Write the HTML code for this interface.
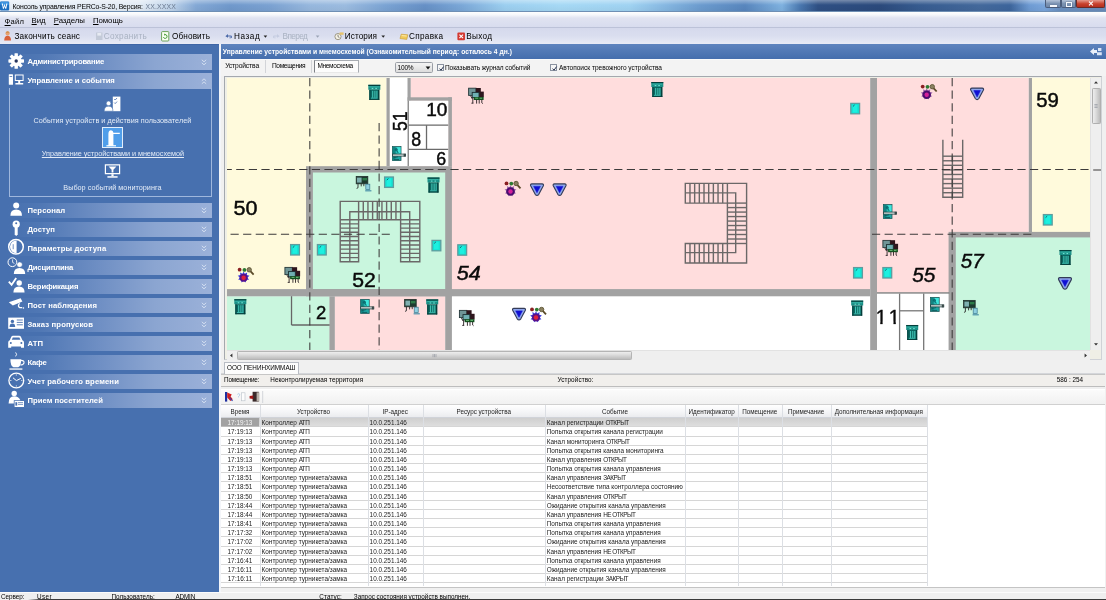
<!DOCTYPE html>
<html lang="ru"><head><meta charset="utf-8"><title>Консоль управления PERCo-S-20</title>
<style>
html,body{margin:0;padding:0;}
body{width:1106px;height:600px;overflow:hidden;background:#f0f0f0;font-family:'Liberation Sans',sans-serif;}
#root{position:relative;width:1106px;height:600px;overflow:hidden;background:#f0f0f0;}
#blur{position:absolute;left:-4px;top:-4px;width:1114px;height:608px;filter:blur(0.4px);}
#blur>#inner{position:absolute;left:4px;top:4px;width:1106px;height:600px;}
#root div,#root span{box-sizing:border-box;}
.t{position:absolute;white-space:pre;}
#title{position:absolute;left:0;top:0;width:1106px;height:12px;
 background:linear-gradient(180deg,rgba(255,255,255,.35) 0,rgba(255,255,255,0) 45%,rgba(0,0,0,.04) 100%),
 linear-gradient(90deg,#e8eff7 0,#e2ebf5 140px,#bed3ea 172px,#84a9d6 196px,#7099cc 230px,#7ba2d2 270px,#97b8de 310px,#9cbce0 345px,#7ba4d4 385px,#6690c6 425px,#7ba8d8 462px,#9ccff0 505px,#a6d9f5 560px,#a0d3f2 630px,#86b8e2 665px,#6c9ccf 700px,#5886be 745px,#7fb2e0 782px,#4a78b0 800px,#2f5084 818px,#2b4a7c 880px,#375c90 920px,#44699c 980px,#3d659c 1010px,#6f9cd4 1030px,#7aa6dc 1044px,#6a90c0 1060px,#6a8cba 1106px);
 border-bottom:1px solid #6f8fb4;}
#winbtns .wb{position:absolute;top:0;height:8px;background:linear-gradient(180deg,#b4c3d8,#7d94b3 50%,#6f88aa);border:0.6px solid #4b5d7c;border-top:none;border-radius:0 0 2px 2px;}
#winbtns .wb.cl{background:linear-gradient(180deg,#e59a8c,#c8402c 55%,#b3301f);border-color:#6a2a25;}
#menubar{position:absolute;left:0;top:12px;width:1106px;height:16px;background:linear-gradient(180deg,#ffffff 0,#f6f7fb 18%,#e0e3f1 40%,#d8dcee 100%);border-bottom:1px solid #bcc2d8;}
#toolbar{position:absolute;left:0;top:28px;width:1106px;height:16px;background:linear-gradient(180deg,#d5d9ec 0,#dadeef 50%,#e8eaf5 100%);}
#sidebar{position:absolute;left:0;top:44px;width:218.6px;height:547.6px;background:#4770af;border-top:1.6px solid #3f66a6;}
#split{position:absolute;left:218.6px;top:44px;width:2px;height:547.6px;background:#f3f5f9;}
.hd{position:absolute;left:8.4px;width:203.6px;height:15.6px;background:linear-gradient(90deg,#4770af 0,#4f77b4 15%,#6f8fc4 45%,#8ba5d1 72%,#9bb1d9 100%);}
#subpanel{position:absolute;left:9px;top:88.4px;width:202.6px;height:108.8px;border:1px solid #9fb7dd;border-top:none;}
#selicon{position:absolute;left:101.8px;top:126.8px;width:21.6px;height:20.8px;background:#509eea;border:1px solid #e3eefb;}
#main{position:absolute;left:220.6px;top:44px;width:884.4px;height:547.6px;background:#f0f0f0;}
#phead{position:absolute;left:220.6px;top:44.2px;width:885.4px;height:14.8px;background:linear-gradient(180deg,#5e84be,#456ead);}
#tabrow{position:absolute;left:220.6px;top:59px;width:885.4px;height:17px;background:#f3f3f3;border-top:1px solid #fafafa;}
#acttab{position:absolute;left:313.6px;top:59.8px;width:45.2px;height:13px;background:#fcfcfc;border:1px solid #a8acb2;border-left-color:#7d8086;border-bottom-color:#e8e8e8;}
.tsep{position:absolute;top:60.4px;width:1px;height:12.5px;background:#d2d4d8;}
#combo{position:absolute;left:394.8px;top:62px;width:38.6px;height:10.8px;background:linear-gradient(180deg,#f4f4f4,#e9e9e9 50%,#dcdcdc);border:1px solid #9b9fa6;border-radius:1.6px;}
#cbtn{display:none;}
.chk{position:absolute;width:6.8px;height:6.8px;background:#f6f6f6;border:0.9px solid #8a92a0;}
#vscroll{position:absolute;left:1089.8px;top:78px;width:11.6px;height:272.4px;background:#efefef;border-left:1px solid #e2e2e2;}
#vthumb{position:absolute;left:1.4px;top:10px;width:8.8px;height:36px;background:linear-gradient(90deg,#ededed 0,#dcdcdc 40%,#bcbcbc 100%);border:0.7px solid #b0b0b0;border-radius:1.2px;}
#hscroll{position:absolute;left:226.6px;top:350.2px;width:863.2px;height:9.4px;background:#efefef;border-top:1px solid #e2e2e2;}
#hthumb{position:absolute;left:10.8px;top:0;width:394.2px;height:8.6px;background:linear-gradient(180deg,#ededed 0,#dcdcdc 40%,#bcbcbc 100%);border:0.7px solid #b4b4b4;border-radius:1.2px;}
#tabstrip{position:absolute;left:220.6px;top:359.8px;width:884.4px;height:14.4px;background:#f0f0f0;border-bottom:1px solid #d4d6da;}
#maptab{position:absolute;left:223.6px;top:361.8px;width:75px;height:12.6px;background:#fcfcfc;border:1px solid #b8bcc4;border-bottom:none;}
#inforow{position:absolute;left:220.6px;top:374.2px;width:884.4px;height:13px;background:#f1efec;border-top:1px solid #c6c6c6;border-bottom:1.4px solid #bdbdbd;}
#logbar{position:absolute;left:220.6px;top:388.8px;width:884.4px;height:16px;background:linear-gradient(180deg,#fbfbfb,#f1f1f1);border-top:1px solid #fff;border-bottom:1px solid #d0d0d0;}
#tbl{position:absolute;left:220.6px;top:404.6px;width:884.4px;height:183.6px;background:#fff;border-bottom:1px solid #c4c4c4;}
#thead{position:absolute;left:220.6px;top:404.6px;width:706.6px;height:13.6px;background:linear-gradient(180deg,#ffffff,#f4f5f7 60%,#ebecef);border-bottom:1px solid #d0d3d9;}
.th{position:absolute;top:404.6px;height:13.6px;line-height:14.6px;font-size:6.3px;text-align:center;color:#222;white-space:nowrap;overflow:hidden;}
.tr{position:absolute;left:221px;width:706.3px;height:9.16px;border-bottom:0.8px solid #d6d6d6;font-size:6.4px;line-height:10.5px;color:#1c1c1c;}
.u{letter-spacing:-0.55px;}
.tr.sel{background:linear-gradient(180deg,#cfcfcf,#dedede);}
.tr .c{position:absolute;top:0;height:11.4px;padding-left:1.6px;white-space:nowrap;overflow:hidden;}
.tr .c0{text-align:center;padding-left:0;}
.tr.sel .c0{background:linear-gradient(#a2a2a2,#a2a2a2) no-repeat;background-size:100% 8.5px;color:#f4f4f4;}
.vl{position:absolute;top:404.6px;width:1px;height:181px;background:#dcdfe4;}
#status{position:absolute;left:0;top:591.6px;width:1106px;height:8.4px;background:#efefef;border-top:1px solid #fbfbfb;}
#botline{position:absolute;left:28px;top:599.35px;width:1078px;height:1px;background:linear-gradient(90deg,rgba(50,50,50,0),#3a3a3a 12px,#3a3a3a);}

#mapframe{position:absolute;left:223.6px;top:75.6px;width:878.6px;height:284.6px;border:1.2px solid #a4a8ae;border-right-color:#cfd2d6;border-bottom-color:#cfd2d6;background:#efefe6;}
#dashx{position:absolute;left:1089.8px;top:168.7px;}
#bg{position:absolute;left:0;top:0;width:1114px;height:608px;background:linear-gradient(180deg,#e9eef6 0,#e9eef6 48px,#f0f0f0 48px);}

</style></head><body>
<div id="root"><div id="blur"><div id="bg"></div><div id="inner">
<div id="title"></div>
<svg id="appicon" width="10" height="10" viewBox="0 0 12 12" style="position:absolute;left:0;top:1.2px"><rect x="0" y="0.5" width="11" height="11" rx="1.2" fill="#1d6fc0"/><rect x="0.5" y="1" width="10" height="4" rx="1" fill="#3f95e0"/><path d="M2.2 3 L3.4 3 L4.2 7.6 L5.5 3.4 L6.8 7.6 L7.6 3 L8.8 3 L7.5 9.4 L6.3 9.4 L5.5 6.4 L4.7 9.4 L3.5 9.4 Z" fill="#fff"/></svg>
<div id="winbtns"><div class="wb" style="left:1045px;width:15.6px"><div style="position:absolute;left:4.4px;top:4.6px;width:6.6px;height:2px;background:#f6f8fc;box-shadow:0 0 1px #3c4a60"></div></div><div class="wb" style="left:1060.6px;width:15.4px"><div style="position:absolute;left:4.2px;top:2.2px;width:6.6px;height:5px;border:1.3px solid #f6f8fc;box-shadow:0 0 1px #3c4a60"></div></div><div class="wb cl" style="left:1076.2px;width:28.6px"></div></div>

<div id="menubar"></div><div id="toolbar"></div>
<svg id="tbicons" width="520" height="16" viewBox="0 28 520 16" style="position:absolute;left:0;top:28px">
<!-- user -->
<circle cx="7.6" cy="33.4" r="2.1" fill="#e8a070"/><path d="M4.2 40.5 Q4.2 35.8 7.6 35.8 Q11 35.8 11 40.5 Z" fill="#d8603a"/><path d="M5.6 32.6 Q7.6 30.2 9.6 32.6 Z" fill="#c08030"/>
<!-- save disabled -->
<rect x="96" y="32.5" width="6.5" height="7.5" fill="#c3cad8"/><rect x="97.3" y="33" width="3.9" height="2.6" fill="#e6eaf2"/>
<!-- refresh -->
<rect x="161.6" y="31.6" width="7.2" height="9.4" rx="0.8" fill="#fbfff4" stroke="#5f9a4a" stroke-width="0.9"/><path d="M163.4 37.2 a1.9 1.9 0 1 0 1.8 -2.6" fill="none" stroke="#3f9a30" stroke-width="1"/><path d="M164.2 33.4 l1.8 1.1 l-1.8 1.2z" fill="#3f9a30"/>
<!-- back -->
<path d="M225.4 36.2 l2.6 -2.1 v1.4 h2.6 a1.4 1.4 0 0 1 0 2.8 h-1.2 v-0.9 h1 a0.5 0.5 0 0 0 0 -1 h-2.4 v1.4z" fill="#4a68a8"/>
<path d="M263.6 35.6 h3.6 l-1.8 2.2z" fill="#222"/>
<!-- forward disabled -->
<path d="M279.6 36.2 l-2.6 -2.1 v1.4 h-2.6 a1.4 1.4 0 0 0 0 2.8 h1.2 v-0.9 h-1 a0.5 0.5 0 0 1 0 -1 h2.4 v1.4z" fill="#c4cbe0"/>
<path d="M315.8 35.6 h3.6 l-1.8 2.2z" fill="#9aa3b5"/>
<!-- history -->
<circle cx="338" cy="36.6" r="3.1" fill="#f4f1e4" stroke="#8a8470" stroke-width="0.8"/><path d="M338 34.8 v1.9 l1.4 0.8" stroke="#555" stroke-width="0.7" fill="none"/><path d="M339.6 32.4 h4 v2.4 h-4z" fill="#e8c36a"/>
<path d="M381.4 35.6 h3.6 l-1.8 2.2z" fill="#222"/>
<!-- help -->
<path d="M400 38.6 l1.2 -4.4 l6.6 0.6 l-1 4.6 z" fill="#f0c958" stroke="#c89a30" stroke-width="0.6"/><path d="M401.6 35.6 l5 0.4" stroke="#fff3c0" stroke-width="0.8"/>
<!-- exit -->
<rect x="457.4" y="32.6" width="7.6" height="7.6" rx="1" fill="#d43a32"/><path d="M459.4 34.6 l3.6 3.6 M463 34.6 l-3.6 3.6" stroke="#fff" stroke-width="1.1"/>
</svg>
<div id="sidebar"></div><div id="split"></div>
<div class="hd" style="top:54.2px"></div>
<svg style="position:absolute;left:200.5px;top:58.8px" width="6" height="7" viewBox="0 0 6 7"><path d="M0.8 0.8 L3 2.8 L5.2 0.8 M0.8 3.8 L3 5.8 L5.2 3.8" stroke="#d6e0f1" stroke-width="0.95" fill="none"/></svg>
<div class="hd" style="top:73.2px"></div>
<svg style="position:absolute;left:200.5px;top:77.8px" width="6" height="7" viewBox="0 0 6 7"><path d="M0.8 2.8 L3 0.8 L5.2 2.8 M0.8 5.8 L3 3.8 L5.2 5.8" stroke="#d6e0f1" stroke-width="0.95" fill="none"/></svg>
<div class="hd" style="top:202.6px"></div>
<svg style="position:absolute;left:200.5px;top:207.2px" width="6" height="7" viewBox="0 0 6 7"><path d="M0.8 0.8 L3 2.8 L5.2 0.8 M0.8 3.8 L3 5.8 L5.2 3.8" stroke="#d6e0f1" stroke-width="0.95" fill="none"/></svg>
<div class="hd" style="top:221.6px"></div>
<svg style="position:absolute;left:200.5px;top:226.2px" width="6" height="7" viewBox="0 0 6 7"><path d="M0.8 0.8 L3 2.8 L5.2 0.8 M0.8 3.8 L3 5.8 L5.2 3.8" stroke="#d6e0f1" stroke-width="0.95" fill="none"/></svg>
<div class="hd" style="top:240.6px"></div>
<svg style="position:absolute;left:200.5px;top:245.2px" width="6" height="7" viewBox="0 0 6 7"><path d="M0.8 0.8 L3 2.8 L5.2 0.8 M0.8 3.8 L3 5.8 L5.2 3.8" stroke="#d6e0f1" stroke-width="0.95" fill="none"/></svg>
<div class="hd" style="top:259.6px"></div>
<svg style="position:absolute;left:200.5px;top:264.2px" width="6" height="7" viewBox="0 0 6 7"><path d="M0.8 0.8 L3 2.8 L5.2 0.8 M0.8 3.8 L3 5.8 L5.2 3.8" stroke="#d6e0f1" stroke-width="0.95" fill="none"/></svg>
<div class="hd" style="top:278.6px"></div>
<svg style="position:absolute;left:200.5px;top:283.2px" width="6" height="7" viewBox="0 0 6 7"><path d="M0.8 0.8 L3 2.8 L5.2 0.8 M0.8 3.8 L3 5.8 L5.2 3.8" stroke="#d6e0f1" stroke-width="0.95" fill="none"/></svg>
<div class="hd" style="top:297.6px"></div>
<svg style="position:absolute;left:200.5px;top:302.2px" width="6" height="7" viewBox="0 0 6 7"><path d="M0.8 0.8 L3 2.8 L5.2 0.8 M0.8 3.8 L3 5.8 L5.2 3.8" stroke="#d6e0f1" stroke-width="0.95" fill="none"/></svg>
<div class="hd" style="top:316.6px"></div>
<svg style="position:absolute;left:200.5px;top:321.2px" width="6" height="7" viewBox="0 0 6 7"><path d="M0.8 0.8 L3 2.8 L5.2 0.8 M0.8 3.8 L3 5.8 L5.2 3.8" stroke="#d6e0f1" stroke-width="0.95" fill="none"/></svg>
<div class="hd" style="top:335.6px"></div>
<svg style="position:absolute;left:200.5px;top:340.2px" width="6" height="7" viewBox="0 0 6 7"><path d="M0.8 0.8 L3 2.8 L5.2 0.8 M0.8 3.8 L3 5.8 L5.2 3.8" stroke="#d6e0f1" stroke-width="0.95" fill="none"/></svg>
<div class="hd" style="top:354.7px"></div>
<svg style="position:absolute;left:200.5px;top:359.3px" width="6" height="7" viewBox="0 0 6 7"><path d="M0.8 0.8 L3 2.8 L5.2 0.8 M0.8 3.8 L3 5.8 L5.2 3.8" stroke="#d6e0f1" stroke-width="0.95" fill="none"/></svg>
<div class="hd" style="top:373.7px"></div>
<svg style="position:absolute;left:200.5px;top:378.3px" width="6" height="7" viewBox="0 0 6 7"><path d="M0.8 0.8 L3 2.8 L5.2 0.8 M0.8 3.8 L3 5.8 L5.2 3.8" stroke="#d6e0f1" stroke-width="0.95" fill="none"/></svg>
<div class="hd" style="top:392.7px"></div>
<svg style="position:absolute;left:200.5px;top:397.3px" width="6" height="7" viewBox="0 0 6 7"><path d="M0.8 0.8 L3 2.8 L5.2 0.8 M0.8 3.8 L3 5.8 L5.2 3.8" stroke="#d6e0f1" stroke-width="0.95" fill="none"/></svg>
<div id="subpanel"></div>
<div id="selicon"></div>
<svg id="sideicons" style="position:absolute;left:0;top:44px" width="218" height="380" viewBox="0 44 218 380" fill="#fff">
<!-- gear -->
<g transform="translate(16.2 61)"><g id="teeth"><rect x="-1.7" y="-7.8" width="3.4" height="15.6" rx="0.6"/><rect x="-7.8" y="-1.7" width="15.6" height="3.4" rx="0.6"/><rect x="-1.7" y="-7.8" width="3.4" height="15.6" rx="0.6" transform="rotate(45)"/><rect x="-1.7" y="-7.8" width="3.4" height="15.6" rx="0.6" transform="rotate(-45)"/></g><circle r="5.4"/><circle r="1.7" fill="#27355e"/></g>
<!-- pc -->
<rect x="8.8" y="74.2" width="4.2" height="10.6" rx="0.6"/><rect x="9.6" y="76" width="2.6" height="0.8" fill="#4770af"/><path d="M14.8 74.4 h8.8 v6.6 h-8.8z M15.8 75.4 v4.6 h6.8 v-4.6z" fill-rule="evenodd"/><rect x="18.2" y="81" width="2" height="2"/><rect x="15.4" y="83" width="7.8" height="1.5"/>
<!-- sub icon 1: people+doc -->
<path d="M112.8 96.6 h7.6 v14.6 h-7.6z"/><path d="M114.2 99 l1 1 l1.8 -2 M114.2 102.6 l1 1 l1.8 -2" stroke="#4770af" stroke-width="0.8" fill="none"/><circle cx="108.6" cy="103.4" r="2.3" stroke="#4770af" stroke-width="0.5"/><path d="M104.2 111.2 q0 -5 4.4 -5 q4.4 0 4.4 5z" stroke="#4770af" stroke-width="0.5"/>
<!-- sub icon 2: turnstile -->
<path d="M108.4 146 v-12 q0 -3.8 2.6 -3.8 q2.2 0 2.4 2.6 h6.4 v1.3 h-6.4 v11.9z"/><rect x="106.4" y="145.2" width="9.6" height="1.2"/>
<!-- sub icon 3: monitor+funnel -->
<path d="M104.8 164.2 h15.4 v10 h-15.4z M106 165.4 v7.6 h13 v-7.6z" fill-rule="evenodd"/><path d="M108.6 166.6 h7.8 l-3 3.2 v2.6 h-1.8 v-2.6z"/><rect x="111.4" y="174.2" width="2.2" height="2"/><rect x="107.4" y="176.2" width="10.2" height="1.5"/>
<!-- person -->
<circle cx="16.2" cy="205.6" r="3"/><path d="M10.4 215.8 q0 -6.2 5.8 -6.2 q5.8 0 5.8 6.2z"/>
<!-- key -->
<circle cx="16.2" cy="224.2" r="3.6"/><circle cx="16.2" cy="223.2" r="1" fill="#4770af"/><path d="M14.7 226.6 h3 v7.8 l-1.5 1.5 l-1.5 -1.5z"/>
<!-- pie -->
<circle cx="16" cy="246.8" r="7.3" fill="none" stroke="#fff" stroke-width="1.5"/><path d="M16.6 240.4 a6.4 6.4 0 0 0 -6.6 6.4 a6.4 6.4 0 0 0 6.6 6.4z"/><path d="M13.2 244.2 v5" stroke="#4770af" stroke-width="0.8"/>
<!-- discipline: clock + person -->
<circle cx="12.4" cy="262.2" r="4.4" fill="none" stroke="#fff" stroke-width="1"/><path d="M12.6 259.4 v3 l1.8 1" stroke="#fff" stroke-width="0.8" fill="none"/><circle cx="19.6" cy="264.6" r="2.7" stroke="#4770af" stroke-width="0.5"/><path d="M13.8 274 q0 -6 5.7 -6 q5.7 0 5.7 6z"/>
<!-- verification: check + person -->
<path d="M8.8 281.6 l2.8 3.2 l4.6 -6.8" stroke="#fff" stroke-width="1.8" fill="none"/><circle cx="19.2" cy="283" r="2.7"/><path d="M13.4 292.4 q0 -6 5.6 -6 q5.6 0 5.6 6z"/>
<!-- camera -->
<path d="M8.8 302.2 l11.8 -4 l1.8 3.4 l-9.6 4z"/><path d="M19.6 303.4 q-2.4 2.8 0.2 4.2 h2.4" stroke="#fff" stroke-width="1.3" fill="none"/><circle cx="23.4" cy="308" r="0.8"/>
<!-- card -->
<path d="M8.2 317.6 h15.8 v11.2 h-15.8z"/><circle cx="12.4" cy="321.4" r="1.7" fill="#4770af"/><path d="M9.6 327 q0 -3.4 2.8 -3.4 q2.8 0 2.8 3.4z" fill="#4770af"/><path d="M16.8 320 h6 M16.8 322.4 h6 M16.8 324.8 h6" stroke="#4770af" stroke-width="0.9"/>
<!-- car -->
<g transform="translate(0 -2)"><path d="M8.2 349.8 v-5.4 q0 -1.8 1.6 -2.2 l1.4 -3.2 q0.5 -1.2 1.8 -1.2 h6.2 q1.3 0 1.8 1.2 l1.4 3.2 q1.6 0.4 1.6 2.2 v5.4 h-3 v-1.4 h-9.8 v1.4z"/><path d="M11.8 341.8 l1 -2.4 h6.6 l1 2.4z" fill="#4770af"/><circle cx="10.8" cy="345" r="1" fill="#4770af"/><circle cx="21.4" cy="345" r="1" fill="#4770af"/></g>
<!-- cup -->
<g transform="translate(0 -1.2)"><path d="M10.4 360.4 h10.8 q0 6.6 -3 8 h-4.8 q-3 -1.4 -3 -8z"/><path d="M21 361.6 q3.4 0 3 2.4 q-0.4 2 -3.6 2.2" stroke="#fff" stroke-width="1.1" fill="none"/><rect x="9.4" y="369.6" width="13" height="1.3"/><path d="M15.6 353.6 q2 1.8 0 4" stroke="#fff" stroke-width="0.9" fill="none"/></g>
<!-- clock -->
<circle cx="16.3" cy="380.5" r="7.4" fill="none" stroke="#fff" stroke-width="1.3"/><path d="M13 377.8 l3.4 2.8 l4.4 -2.2" stroke="#fff" stroke-width="1" fill="none"/><path d="M16.3 374.4 v1.2 M16.3 385.4 v1.2 M10.2 380.5 h1.2 M21.2 380.5 h1.2" stroke="#fff" stroke-width="0.8"/>
<!-- visitor -->
<circle cx="14.2" cy="393.4" r="2.7"/><path d="M8.6 403.4 q0 -7.2 5.6 -7.2 q4.4 0 6.2 4 h-6.6 v3.2z"/><path d="M14.6 401 h9.4 v6 h-9.4z"/><path d="M18 402.6 h5 M18 404.4 h5" stroke="#4770af" stroke-width="0.7"/><rect x="15.4" y="402.2" width="1.8" height="3.4" fill="#4770af"/>
</svg>

<div id="main"></div><div id="phead"></div>
<svg style="position:absolute;left:1089px;top:46px" width="14" height="11" viewBox="0 0 14 11"><path d="M1 5.5 L5 2 V4 H8 V7 H5 V9 Z" fill="#e9eff9"/><path d="M9 2 h3.4 v3 h-3.4z M8 6.2 h4.8 v3 h-4.8z" fill="#dbe5f5"/></svg>
<div id="tabrow"></div><div id="acttab"></div><div class="tsep" style="left:265.3px"></div><div class="tsep" style="left:310.6px"></div>
<div id="combo"><div id="cbtn"></div></div>
<svg style="position:absolute;left:425.2px;top:65.8px" width="6" height="4" viewBox="0 0 6 4"><path d="M0.6 0.6 h4.8 l-2.4 2.8z" fill="#111"/></svg>
<div class="chk" style="left:437.2px;top:64.4px"><svg width="7" height="7" viewBox="0 0 7 7" style="position:absolute;left:-0.6px;top:-0.6px"><path d="M1.6 3.6 L3 5.2 L5.6 1.6" stroke="#2a3550" stroke-width="1" fill="none"/></svg></div>
<div class="chk" style="left:550.2px;top:64.4px"><svg width="7" height="7" viewBox="0 0 7 7" style="position:absolute;left:-0.6px;top:-0.6px"><path d="M1.6 3.6 L3 5.2 L5.6 1.6" stroke="#2a3550" stroke-width="1" fill="none"/></svg></div>
<div id="mapframe"></div>
<svg id="map" style="position:absolute;left:227.0px;top:78.0px;overflow:hidden" width="874.0" height="272.2" viewBox="227.0 78.0 874.0 272.2" font-family="'Liberation Sans',sans-serif">
<defs>
<symbol id="turn" viewBox="0 0 12 15" overflow="visible"><rect x="0" y="0" width="12" height="5" fill="#1b8f86"/><rect x="0" y="0" width="12" height="1.2" fill="#043f3c"/><rect x="1" y="1.6" width="10" height="1" fill="#37b5a8"/><path d="M3.4 3.6 h1.6 M7 3.6 h1.6" stroke="#7ff0e0" stroke-width="0.9"/><rect x="1" y="5" width="10" height="10" fill="#0c6660"/><rect x="1" y="5" width="1.2" height="10" fill="#064844"/><rect x="9.8" y="5" width="1.2" height="10" fill="#053d3a"/><path d="M4.4 6 v7 M6.6 6 v7 M8.6 6 v7" stroke="#46cdbd" stroke-width="1"/><path d="M2.6 13.3 h6.6" stroke="#3fc0b2" stroke-width="0.9"/><rect x="1" y="14.2" width="10" height="0.8" fill="#043b38"/></symbol>
<symbol id="door" viewBox="0 0 10 11.6" overflow="visible"><rect x="0.6" y="0.6" width="8.8" height="10.4" fill="#12e2d2" stroke="#5f9c9e" stroke-width="1.3"/><rect x="2.6" y="2" width="4.6" height="7.6" fill="#1cf0e0"/><path d="M2.8 3.6 l1.6 -1.4" stroke="#155e68" stroke-width="1"/></symbol>
<symbol id="lock" viewBox="0 0 14 15" overflow="visible"><rect x="0.4" y="0.4" width="8.6" height="14" fill="#1fa5a2" stroke="#1d5c5c" stroke-width="0.8"/><rect x="0.8" y="0.8" width="2.6" height="13.2" fill="#128482"/><rect x="4.6" y="1" width="4" height="6.4" fill="#3fe6dc"/><circle cx="4.2" cy="3.2" r="1.5" fill="#0b6a70"/><path d="M4.2 3.4 l2 3.4" stroke="#0e7a7c" stroke-width="1.2"/><rect x="0.4" y="7.9" width="13.2" height="2" fill="#eef4f4" stroke="#24403f" stroke-width="0.8"/><rect x="11.6" y="7.6" width="2" height="2.8" fill="#3a4848"/><path d="M1.4 11.6 l4.6 -1 M2 13.4 h5" stroke="#0e5e60" stroke-width="1"/></symbol>
<symbol id="comp" viewBox="0 0 16 16" overflow="visible"><rect x="0.4" y="0.4" width="7.4" height="7.2" fill="#6f9597" stroke="#26383a" stroke-width="0.9"/><rect x="7.6" y="0.2" width="5" height="5" fill="#2e141b"/><rect x="10.4" y="3.8" width="5.2" height="5.6" fill="#2f171e"/><rect x="4" y="4.6" width="6.8" height="5.2" fill="#6fb0b2" stroke="#1c3032" stroke-width="0.9"/><rect x="5.6" y="9.2" width="9.8" height="3" fill="#12501f"/><path d="M7 10.4 h3 M11.4 10.4 h2.6" stroke="#7fd48a" stroke-width="0.8"/><path d="M2.4 8 l1.6 3 M4.6 10 v5.4 M3.2 15.4 h2 M8.4 12 v3.8 M11 12 v3.8 M13.6 12 v3 l1 0.8" stroke="#2a2024" stroke-width="0.9" fill="none"/></symbol>
<symbol id="comp2" viewBox="0 0 16 16" overflow="visible"><rect x="0.4" y="0.4" width="11.6" height="7.4" fill="#1d3a30" stroke="#22302c" stroke-width="0.8"/><rect x="1.2" y="1.6" width="4.6" height="5" fill="#7fb0b0"/><rect x="6.6" y="2" width="4.6" height="2.4" fill="#2c7a48"/><path d="M2.2 7.8 v4 l-1.4 0.6 M5.4 7.8 v2.6 M8 7.8 v2.4" stroke="#2a2a2a" stroke-width="0.9" fill="none"/><rect x="10" y="8.2" width="4" height="5.4" fill="#8fd0e0" stroke="#3a7890" stroke-width="0.7"/><path d="M9.4 14.8 h6.2" stroke="#4a90a8" stroke-width="1.2"/></symbol>
<symbol id="sens" viewBox="0 0 16.5 15.5" overflow="visible"><path d="M6 3.6 l1.1 2.3 l2.5 -1.3 l-0.4 2.7 l2.7 0.6 l-2.1 1.8 l1.6 2.2 l-2.8 0.1 l-0.6 2.7 l-2 -1.8 l-2 1.8 l-0.6 -2.7 l-2.8 -0.1 l1.6 -2.2 l-2.1 -1.8 l2.7 -0.6 l-0.4 -2.7 l2.5 1.3 z" fill="#7a3a9a" opacity="0.75"/><circle cx="2" cy="1.9" r="1.9" fill="#8a1f22"/><circle cx="6.8" cy="2.1" r="1.9" fill="#2c7a32"/><circle cx="11.6" cy="2" r="2.2" fill="#8a8060" stroke="#5e5636" stroke-width="0.9"/><path d="M13 3.6 l3 3.2" stroke="#5a4a28" stroke-width="1.8"/><circle cx="6" cy="10" r="4.3" fill="#4a0d6e"/><circle cx="6" cy="10" r="2.2" fill="#d4209a"/></symbol>
<symbol id="sens2" viewBox="0 0 16.5 15.5" overflow="visible"><path d="M6 3.6 l1.1 2.3 l2.5 -1.3 l-0.4 2.7 l2.7 0.6 l-2.1 1.8 l1.6 2.2 l-2.8 0.1 l-0.6 2.7 l-2 -1.8 l-2 1.8 l-0.6 -2.7 l-2.8 -0.1 l1.6 -2.2 l-2.1 -1.8 l2.7 -0.6 l-0.4 -2.7 l2.5 1.3 z" fill="#3a3ae0"/><circle cx="2" cy="1.9" r="1.9" fill="#8a1f22"/><circle cx="6.8" cy="2.1" r="1.9" fill="#2c7a32"/><circle cx="11.6" cy="2" r="2.2" fill="#8a8060" stroke="#5e5636" stroke-width="0.9"/><path d="M13 3.6 l3 3.2" stroke="#5a4a28" stroke-width="1.8"/><circle cx="6" cy="10" r="4" fill="#5a0f86"/><circle cx="6" cy="10" r="2.2" fill="#e0203a"/></symbol>
<symbol id="tri" viewBox="0 0 14.4 13" overflow="visible"><path d="M2.2 0.8 H12.2 Q14.4 1 13.4 3 L9 11.2 Q7.2 13.4 5.4 11.2 L1 3 Q0 1 2.2 0.8 Z" fill="#8ea6ec" stroke="#343c58" stroke-width="1.15"/><path d="M3.9 3.3 H10.5 L7.2 9.6 Z" fill="#1010d4" stroke="#1010d4" stroke-width="0.6" stroke-linejoin="round"/></symbol>
</defs>
<rect x="227.0" y="78.0" width="874.00" height="272.20" fill="#ffffff"/>
<rect x="227.0" y="78.0" width="159.50" height="211.10" fill="#fffadc"/>
<rect x="410.7" y="78.0" width="459.50" height="211.80" fill="#ffdddd"/>
<rect x="877" y="78.0" width="151.80" height="214.40" fill="#ffdddd"/>
<rect x="1032" y="78.0" width="59.00" height="154.00" fill="#fffadc"/>
<rect x="389.7" y="78.0" width="17.80" height="88.30" fill="#ffffff"/>
<rect x="227.0" y="296.3" width="102.60" height="53.90" fill="#c9f6de"/>
<rect x="334.6" y="296.3" width="110.60" height="53.90" fill="#ffdddd"/>
<rect x="451.9" y="296.3" width="418.30" height="53.90" fill="#ffffff"/>
<rect x="877" y="293.6" width="72.40" height="56.60" fill="#ffffff"/>
<rect x="386.5" y="78.0" width="3.20" height="88.30" fill="#a2a2a2"/>
<rect x="407.5" y="78.0" width="3.20" height="22.80" fill="#a2a2a2"/>
<rect x="407.5" y="97.3" width="44.40" height="3.50" fill="#a2a2a2"/>
<rect x="448.2" y="97.3" width="3.70" height="69.00" fill="#a2a2a2"/>
<rect x="408.6" y="100.8" width="39.60" height="65.50" fill="#ffffff"/>
<rect x="407.6" y="100.8" width="1.20" height="65.50" fill="#777"/>
<rect x="306.0" y="166.2" width="145.90" height="130.10" fill="#a2a2a2"/>
<rect x="312.9" y="172.5" width="132.30" height="116.60" fill="#c9f6de"/>
<rect x="227.0" y="289.1" width="643.20" height="7.20" fill="#a2a2a2"/>
<rect x="329.4" y="296.3" width="5.40" height="53.90" fill="#a2a2a2"/>
<rect x="445.2" y="289.1" width="6.70" height="61.10" fill="#a2a2a2"/>
<rect x="870.2" y="78.0" width="6.80" height="272.20" fill="#a2a2a2"/>
<rect x="1028.8" y="78.0" width="3.20" height="154.00" fill="#a2a2a2"/>
<rect x="948.6" y="231.9" width="142.40" height="118.30" fill="#a2a2a2"/>
<rect x="955.8" y="237.4" width="135.20" height="112.80" fill="#c9f6de"/>
<rect x="877" y="292.3" width="72.40" height="1.30" fill="#777"/>
<path d="M408.6 125.2 L448.2 125.2" stroke="#6a6a6a" stroke-width="1.3" fill="none"/>
<path d="M426.5 125.2 L426.5 149.4" stroke="#6a6a6a" stroke-width="1.3" fill="none"/>
<path d="M408.6 149.4 L448.2 149.4" stroke="#6a6a6a" stroke-width="1.3" fill="none"/>
<path d="M291.5 296.2 L291.5 325" stroke="#666" stroke-width="1.3" fill="none"/>
<path d="M291.5 325 L329.6 325" stroke="#666" stroke-width="1.3" fill="none"/>
<path d="M899.6 293.6 L899.6 350.2" stroke="#777" stroke-width="1.3" fill="none"/>
<path d="M923.7 293.6 L923.7 350.2" stroke="#777" stroke-width="1.3" fill="none"/>
<path d="M899.6 310.8 L923.7 310.8" stroke="#777" stroke-width="1.3" fill="none"/>
<path d="M340.2 261.8 V201.4 H419.8 V261.8 H400.6 V219.7 H358.6 V261.8 Z" stroke="#6b6868" stroke-width="1.4" fill="none"/>
<path d="M349.8 261.8 V211.7 H409.7 V261.8" stroke="#6b6868" stroke-width="1.4" fill="none"/>
<path d="M363.27 201.4 V219.7" stroke="#6b6868" stroke-width="1.4" fill="none"/>
<path d="M367.93 201.4 V219.7" stroke="#6b6868" stroke-width="1.4" fill="none"/>
<path d="M372.60 201.4 V219.7" stroke="#6b6868" stroke-width="1.4" fill="none"/>
<path d="M377.27 201.4 V219.7" stroke="#6b6868" stroke-width="1.4" fill="none"/>
<path d="M381.93 201.4 V219.7" stroke="#6b6868" stroke-width="1.4" fill="none"/>
<path d="M386.60 201.4 V219.7" stroke="#6b6868" stroke-width="1.4" fill="none"/>
<path d="M391.27 201.4 V219.7" stroke="#6b6868" stroke-width="1.4" fill="none"/>
<path d="M395.93 201.4 V219.7" stroke="#6b6868" stroke-width="1.4" fill="none"/>
<path d="M358.6 201.4 V219.7 M400.6 201.4 V219.7" stroke="#6b6868" stroke-width="1.4" fill="none"/>
<path d="M340.2 219.70 H358.6 M400.6 219.70 H419.8" stroke="#6b6868" stroke-width="1.4" fill="none"/>
<path d="M340.2 223.91 H358.6 M400.6 223.91 H419.8" stroke="#6b6868" stroke-width="1.4" fill="none"/>
<path d="M340.2 228.12 H358.6 M400.6 228.12 H419.8" stroke="#6b6868" stroke-width="1.4" fill="none"/>
<path d="M340.2 232.33 H358.6 M400.6 232.33 H419.8" stroke="#6b6868" stroke-width="1.4" fill="none"/>
<path d="M340.2 236.54 H358.6 M400.6 236.54 H419.8" stroke="#6b6868" stroke-width="1.4" fill="none"/>
<path d="M340.2 240.75 H358.6 M400.6 240.75 H419.8" stroke="#6b6868" stroke-width="1.4" fill="none"/>
<path d="M340.2 244.96 H358.6 M400.6 244.96 H419.8" stroke="#6b6868" stroke-width="1.4" fill="none"/>
<path d="M340.2 249.17 H358.6 M400.6 249.17 H419.8" stroke="#6b6868" stroke-width="1.4" fill="none"/>
<path d="M340.2 253.38 H358.6 M400.6 253.38 H419.8" stroke="#6b6868" stroke-width="1.4" fill="none"/>
<path d="M340.2 257.59 H358.6 M400.6 257.59 H419.8" stroke="#6b6868" stroke-width="1.4" fill="none"/>
<path d="M685.3 183.4 H746.6 V263 H685.3 V243.5 H727.4 V203.1 H685.3 Z" stroke="#6b6868" stroke-width="1.4" fill="none"/>
<path d="M685.3 192.9 H735.7 V252.6 H685.3" stroke="#6b6868" stroke-width="1.4" fill="none"/>
<path d="M689.98 183.4 V203.1 M689.98 243.5 V263" stroke="#6b6868" stroke-width="1.4" fill="none"/>
<path d="M694.66 183.4 V203.1 M694.66 243.5 V263" stroke="#6b6868" stroke-width="1.4" fill="none"/>
<path d="M699.33 183.4 V203.1 M699.33 243.5 V263" stroke="#6b6868" stroke-width="1.4" fill="none"/>
<path d="M704.01 183.4 V203.1 M704.01 243.5 V263" stroke="#6b6868" stroke-width="1.4" fill="none"/>
<path d="M708.69 183.4 V203.1 M708.69 243.5 V263" stroke="#6b6868" stroke-width="1.4" fill="none"/>
<path d="M713.37 183.4 V203.1 M713.37 243.5 V263" stroke="#6b6868" stroke-width="1.4" fill="none"/>
<path d="M718.04 183.4 V203.1 M718.04 243.5 V263" stroke="#6b6868" stroke-width="1.4" fill="none"/>
<path d="M722.72 183.4 V203.1 M722.72 243.5 V263" stroke="#6b6868" stroke-width="1.4" fill="none"/>
<path d="M727.40 183.4 V203.1 M727.40 243.5 V263" stroke="#6b6868" stroke-width="1.4" fill="none"/>
<path d="M727.4 203.10 H746.6" stroke="#6b6868" stroke-width="1.4" fill="none"/>
<path d="M727.4 207.59 H746.6" stroke="#6b6868" stroke-width="1.4" fill="none"/>
<path d="M727.4 212.08 H746.6" stroke="#6b6868" stroke-width="1.4" fill="none"/>
<path d="M727.4 216.57 H746.6" stroke="#6b6868" stroke-width="1.4" fill="none"/>
<path d="M727.4 221.06 H746.6" stroke="#6b6868" stroke-width="1.4" fill="none"/>
<path d="M727.4 225.54 H746.6" stroke="#6b6868" stroke-width="1.4" fill="none"/>
<path d="M727.4 230.03 H746.6" stroke="#6b6868" stroke-width="1.4" fill="none"/>
<path d="M727.4 234.52 H746.6" stroke="#6b6868" stroke-width="1.4" fill="none"/>
<path d="M727.4 239.01 H746.6" stroke="#6b6868" stroke-width="1.4" fill="none"/>
<path d="M727.4 243.50 H746.6" stroke="#6b6868" stroke-width="1.4" fill="none"/>
<path d="M942.9 139.8 V197.3 H962.7 V139.8" stroke="#6b6868" stroke-width="1.4" fill="none"/>
<path d="M952.4 156.2 V197.3" stroke="#6b6868" stroke-width="1.4" fill="none"/>
<path d="M942.9 156.20 H962.7" stroke="#6b6868" stroke-width="1.4" fill="none"/>
<path d="M942.9 160.77 H962.7" stroke="#6b6868" stroke-width="1.4" fill="none"/>
<path d="M942.9 165.33 H962.7" stroke="#6b6868" stroke-width="1.4" fill="none"/>
<path d="M942.9 169.90 H962.7" stroke="#6b6868" stroke-width="1.4" fill="none"/>
<path d="M942.9 174.47 H962.7" stroke="#6b6868" stroke-width="1.4" fill="none"/>
<path d="M942.9 179.03 H962.7" stroke="#6b6868" stroke-width="1.4" fill="none"/>
<path d="M942.9 183.60 H962.7" stroke="#6b6868" stroke-width="1.4" fill="none"/>
<path d="M942.9 188.17 H962.7" stroke="#6b6868" stroke-width="1.4" fill="none"/>
<path d="M942.9 192.73 H962.7" stroke="#6b6868" stroke-width="1.4" fill="none"/>
<path d="M227.0 169.6 L1101.0 169.6" stroke="#3c3a3a" stroke-width="1.05" stroke-dasharray="8.2 4.4" stroke-dashoffset="3.4" fill="none"/>
<path d="M227.0 234.2 L389.8 234.2" stroke="#3c3a3a" stroke-width="1.05" stroke-dasharray="8.2 4.4" stroke-dashoffset="9.1" fill="none"/>
<path d="M872 234.2 L1032.5 234.2" stroke="#3c3a3a" stroke-width="1.05" stroke-dasharray="8.2 4.4" stroke-dashoffset="0" fill="none"/>
<path d="M309.8 78.0 L309.8 350.2" stroke="#3c3a3a" stroke-width="1.05" stroke-dasharray="8.2 4.4" stroke-dashoffset="0" fill="none"/>
<path d="M379.1 123 L379.1 350.2" stroke="#3c3a3a" stroke-width="1.05" stroke-dasharray="8.2 4.4" stroke-dashoffset="0" fill="none"/>
<path d="M952.2 78.0 L952.2 350.2" stroke="#3c3a3a" stroke-width="1.05" stroke-dasharray="8.2 4.4" stroke-dashoffset="0" fill="none"/>
<use href="#turn" x="368.3" y="84.8" width="12" height="15"/>
<use href="#turn" x="651.3" y="82" width="12" height="15"/>
<use href="#turn" x="427.5" y="177.5" width="12" height="15"/>
<use href="#turn" x="234.3" y="299.2" width="12" height="15"/>
<use href="#turn" x="426.2" y="299.4" width="12" height="15"/>
<use href="#turn" x="851.2" y="300.6" width="12" height="15"/>
<use href="#turn" x="906.2" y="325" width="12" height="15"/>
<use href="#turn" x="1059.5" y="250" width="12" height="15"/>
<use href="#door" x="290" y="244" width="10" height="11.6"/>
<use href="#door" x="316.8" y="244" width="10" height="11.6"/>
<use href="#door" x="384" y="176.4" width="10" height="11.6"/>
<use href="#door" x="431.4" y="239.8" width="10" height="11.6"/>
<use href="#door" x="457.2" y="244.2" width="10" height="11.6"/>
<use href="#door" x="850.2" y="102.8" width="10" height="11.6"/>
<use href="#door" x="853" y="267" width="10" height="11.6"/>
<use href="#door" x="882.3" y="267" width="10" height="11.6"/>
<use href="#door" x="1042.8" y="214" width="10" height="11.6"/>
<use href="#lock" x="392" y="146.2" width="14" height="15"/>
<use href="#lock" x="360.2" y="299" width="14" height="15"/>
<use href="#lock" x="883" y="204.2" width="14" height="15"/>
<use href="#lock" x="930.2" y="297" width="14" height="15"/>
<use href="#comp" x="468.2" y="87.8" width="16" height="16"/>
<use href="#comp" x="284.5" y="267" width="16" height="16"/>
<use href="#comp" x="459" y="310" width="16" height="16"/>
<use href="#comp" x="882.5" y="240" width="16" height="16"/>
<use href="#comp2" x="355.8" y="176" width="16" height="16"/>
<use href="#comp2" x="404.2" y="299" width="16" height="16"/>
<use href="#comp2" x="963.2" y="300" width="16" height="16"/>
<use href="#sens" x="504.5" y="181.5" width="16.5" height="15.5"/>
<use href="#sens" x="920.7" y="84.7" width="16.5" height="15.5"/>
<use href="#sens2" x="237.6" y="267.8" width="16.5" height="15.5"/>
<use href="#sens2" x="530" y="307.5" width="16.5" height="15.5"/>
<use href="#tri" x="529.8" y="183.1" width="14.4" height="13"/>
<use href="#tri" x="552.4" y="183.1" width="14.4" height="13"/>
<use href="#tri" x="969.9" y="87.3" width="14.4" height="13"/>
<use href="#tri" x="1057.8" y="276.9" width="14.4" height="13"/>
<use href="#tri" x="511.8" y="307.6" width="14.4" height="13"/>
<text x="233.6" y="215.5" font-size="19.97" textLength="24.0" lengthAdjust="spacingAndGlyphs" fill="#0a0a0a" stroke="#0a0a0a" stroke-width="0.45">50</text>
<text x="426.2" y="116" font-size="18.44" textLength="21.2" lengthAdjust="spacingAndGlyphs" fill="#0a0a0a" stroke="#0a0a0a" stroke-width="0.45">10</text>
<text x="411.3" y="145.6" font-size="20.11" textLength="9.9" lengthAdjust="spacingAndGlyphs" fill="#0a0a0a" stroke="#0a0a0a" stroke-width="0.45">8</text>
<text x="436.3" y="165.2" font-size="18.72" textLength="9.9" lengthAdjust="spacingAndGlyphs" fill="#0a0a0a" stroke="#0a0a0a" stroke-width="0.45">6</text>
<text x="352.3" y="287.2" font-size="19.55" textLength="23.6" lengthAdjust="spacingAndGlyphs" fill="#0a0a0a" stroke="#0a0a0a" stroke-width="0.45">52</text>
<text x="315.9" y="319" font-size="18.44" textLength="10.3" lengthAdjust="spacingAndGlyphs" fill="#0a0a0a" stroke="#0a0a0a" stroke-width="0.45">2</text>
<text x="456.8" y="280" font-size="19.83" textLength="24.0" lengthAdjust="spacingAndGlyphs" fill="#0a0a0a" stroke="#0a0a0a" stroke-width="0.45" font-style="italic">54</text>
<text x="1036.2" y="107.3" font-size="20.39" textLength="22.7" lengthAdjust="spacingAndGlyphs" fill="#0a0a0a" stroke="#0a0a0a" stroke-width="0.45">59</text>
<text x="912.2" y="281.8" font-size="19.97" textLength="23.2" lengthAdjust="spacingAndGlyphs" fill="#0a0a0a" stroke="#0a0a0a" stroke-width="0.45" font-style="italic">55</text>
<text x="960.8" y="267.7" font-size="20.25" textLength="22.8" lengthAdjust="spacingAndGlyphs" fill="#0a0a0a" stroke="#0a0a0a" stroke-width="0.45" font-style="italic">57</text>
<clipPath id="c11"><rect x="870" y="300" width="40" height="21.7"/><rect x="880.3" y="321.4" width="2.3" height="3"/><rect x="893.5" y="321.4" width="2.3" height="3"/></clipPath>
<text font-size="19.6" fill="#0a0a0a" stroke="#0a0a0a" stroke-width="0.4" clip-path="url(#c11)"><tspan x="875.7" y="324.1">1</tspan><tspan x="888.9" y="324.1">1</tspan></text>
<text x="0" y="0" font-size="19.69" textLength="19.6" lengthAdjust="spacingAndGlyphs" fill="#0a0a0a" stroke="#0a0a0a" stroke-width="0.45" transform="translate(406.7 131) rotate(-90)">51</text>
</svg>
<div id="vscroll"><div id="vthumb"></div></div><div id="hscroll"><div id="hthumb"></div></div>
<svg style="position:absolute;left:1090.6px;top:78.4px" width="10" height="275" viewBox="0 0 10 275"><path d="M3 5.6 h4 l-2 -2.4z M3 265.2 h4 l-2 2.4z" fill="#333"/><path d="M3.4 26.5 h3.2 M3.4 28 h3.2 M3.4 29.5 h3.2" stroke="#8a8f98" stroke-width="0.6"/></svg>
<svg style="position:absolute;left:226px;top:350.5px" width="865" height="9" viewBox="0 0 865 9"><path d="M6.4 2.6 v4 l-2.4 -2z M858.6 2.6 v4 l2.4 -2z" fill="#333"/><path d="M207 3 v3.2 M208.5 3 v3.2 M210 3 v3.2" stroke="#8a8f98" stroke-width="0.6"/></svg>
<svg id="dashx" width="11.2" height="2" viewBox="1089.8 168.7 11.2 2"><path d="M227 169.6 H1101" stroke="#3c3a3a" stroke-width="1.05" stroke-dasharray="8.2 4.4" stroke-dashoffset="3.4"/></svg>
<div id="tabstrip"></div><div id="maptab"></div><div id="inforow"></div>
<div id="logbar"></div>
<svg style="position:absolute;left:222px;top:390px" width="44" height="14" viewBox="222 390 44 14">
<path d="M225 392 h2.2 v9.6 h-2.2z" fill="#2030a0"/><path d="M227.2 392.4 l4.6 2.2 l-1.2 2 l2.2 2.6 l-2.4 1.8 l-3.2 -3.4z" fill="#d02020"/><path d="M229.5 397.5 l3 3.4" stroke="#3040b0" stroke-width="1.1"/>
<rect x="241.4" y="392.8" width="3.6" height="8" fill="#fdfdfd" stroke="#b8c0c8" stroke-width="0.6"/><path d="M237.4 394.4 q1.6 -1.6 2.4 0 q0.2 1.2 -1.2 2 v1" stroke="#a8c8e8" stroke-width="0.9" fill="none"/>
<rect x="252.6" y="391.8" width="6.2" height="9.8" fill="#3a2a2a"/><rect x="256.6" y="392.4" width="2.8" height="9" fill="#b8b0a8"/><path d="M249.6 396 l3.6 -0.6 v3.6 l-3.6 -0.6z" fill="#a01818"/>
<path d="M262.7 391 v12" stroke="#c8ccd2" stroke-width="0.8"/>
</svg>
<div id="tbl"></div><div id="thead"></div>
<div class="th" style="left:221px;width:38.0px">Время</div>
<div class="th" style="left:260px;width:107.0px">Устройство</div>
<div class="th" style="left:368px;width:54.3px">IP-адрес</div>
<div class="th" style="left:423.3px;width:120.9px">Ресурс устройства</div>
<div class="th" style="left:545.2px;width:139.6px">Событие</div>
<div class="th" style="left:685.8px;width:51.7px">Идентификатор</div>
<div class="th" style="left:738.5px;width:42.5px">Помещение</div>
<div class="th" style="left:782px;width:48.3px">Примечание</div>
<div class="th" style="left:831.3px;width:95.0px">Дополнительная информация</div>
<div class="tr sel" style="top:418.30px"><span class="c c0" style="left:0;width:38px">17:19:13</span><span class="c" style="left:39px;width:107px">Контроллер <span class="u">АТП</span></span><span class="c" style="left:147px;width:54.3px">10.0.251.146</span><span class="c" style="left:324.2px;width:139.6px">Канал регистрации <span class="u">ОТКРЫТ</span></span></div>
<div class="tr" style="top:427.46px"><span class="c c0" style="left:0;width:38px">17:19:13</span><span class="c" style="left:39px;width:107px">Контроллер <span class="u">АТП</span></span><span class="c" style="left:147px;width:54.3px">10.0.251.146</span><span class="c" style="left:324.2px;width:139.6px">Попытка открытия канала регистрации</span></div>
<div class="tr" style="top:436.62px"><span class="c c0" style="left:0;width:38px">17:19:13</span><span class="c" style="left:39px;width:107px">Контроллер <span class="u">АТП</span></span><span class="c" style="left:147px;width:54.3px">10.0.251.146</span><span class="c" style="left:324.2px;width:139.6px">Канал мониторинга <span class="u">ОТКРЫТ</span></span></div>
<div class="tr" style="top:445.78px"><span class="c c0" style="left:0;width:38px">17:19:13</span><span class="c" style="left:39px;width:107px">Контроллер <span class="u">АТП</span></span><span class="c" style="left:147px;width:54.3px">10.0.251.146</span><span class="c" style="left:324.2px;width:139.6px">Попытка открытия канала мониторинга</span></div>
<div class="tr" style="top:454.94px"><span class="c c0" style="left:0;width:38px">17:19:13</span><span class="c" style="left:39px;width:107px">Контроллер <span class="u">АТП</span></span><span class="c" style="left:147px;width:54.3px">10.0.251.146</span><span class="c" style="left:324.2px;width:139.6px">Канал управления <span class="u">ОТКРЫТ</span></span></div>
<div class="tr" style="top:464.10px"><span class="c c0" style="left:0;width:38px">17:19:13</span><span class="c" style="left:39px;width:107px">Контроллер <span class="u">АТП</span></span><span class="c" style="left:147px;width:54.3px">10.0.251.146</span><span class="c" style="left:324.2px;width:139.6px">Попытка открытия канала управления</span></div>
<div class="tr" style="top:473.26px"><span class="c c0" style="left:0;width:38px">17:18:51</span><span class="c" style="left:39px;width:107px">Контроллер турникета/замка</span><span class="c" style="left:147px;width:54.3px">10.0.251.146</span><span class="c" style="left:324.2px;width:139.6px">Канал управления <span class="u">ЗАКРЫТ</span></span></div>
<div class="tr" style="top:482.42px"><span class="c c0" style="left:0;width:38px">17:18:51</span><span class="c" style="left:39px;width:107px">Контроллер турникета/замка</span><span class="c" style="left:147px;width:54.3px">10.0.251.146</span><span class="c" style="left:324.2px;width:139.6px">Несоответствие типа контроллера состоянию в <span class="u">БД</span></span></div>
<div class="tr" style="top:491.58px"><span class="c c0" style="left:0;width:38px">17:18:50</span><span class="c" style="left:39px;width:107px">Контроллер турникета/замка</span><span class="c" style="left:147px;width:54.3px">10.0.251.146</span><span class="c" style="left:324.2px;width:139.6px">Канал управления <span class="u">ОТКРЫТ</span></span></div>
<div class="tr" style="top:500.74px"><span class="c c0" style="left:0;width:38px">17:18:44</span><span class="c" style="left:39px;width:107px">Контроллер турникета/замка</span><span class="c" style="left:147px;width:54.3px">10.0.251.146</span><span class="c" style="left:324.2px;width:139.6px">Ожидание открытия канала управления</span></div>
<div class="tr" style="top:509.90px"><span class="c c0" style="left:0;width:38px">17:18:44</span><span class="c" style="left:39px;width:107px">Контроллер турникета/замка</span><span class="c" style="left:147px;width:54.3px">10.0.251.146</span><span class="c" style="left:324.2px;width:139.6px">Канал управления <span class="u">НЕ ОТКРЫТ</span></span></div>
<div class="tr" style="top:519.06px"><span class="c c0" style="left:0;width:38px">17:18:41</span><span class="c" style="left:39px;width:107px">Контроллер турникета/замка</span><span class="c" style="left:147px;width:54.3px">10.0.251.146</span><span class="c" style="left:324.2px;width:139.6px">Попытка открытия канала управления</span></div>
<div class="tr" style="top:528.22px"><span class="c c0" style="left:0;width:38px">17:17:32</span><span class="c" style="left:39px;width:107px">Контроллер турникета/замка</span><span class="c" style="left:147px;width:54.3px">10.0.251.146</span><span class="c" style="left:324.2px;width:139.6px">Попытка открытия канала управления</span></div>
<div class="tr" style="top:537.38px"><span class="c c0" style="left:0;width:38px">17:17:02</span><span class="c" style="left:39px;width:107px">Контроллер турникета/замка</span><span class="c" style="left:147px;width:54.3px">10.0.251.146</span><span class="c" style="left:324.2px;width:139.6px">Ожидание открытия канала управления</span></div>
<div class="tr" style="top:546.54px"><span class="c c0" style="left:0;width:38px">17:17:02</span><span class="c" style="left:39px;width:107px">Контроллер турникета/замка</span><span class="c" style="left:147px;width:54.3px">10.0.251.146</span><span class="c" style="left:324.2px;width:139.6px">Канал управления <span class="u">НЕ ОТКРЫТ</span></span></div>
<div class="tr" style="top:555.70px"><span class="c c0" style="left:0;width:38px">17:16:41</span><span class="c" style="left:39px;width:107px">Контроллер турникета/замка</span><span class="c" style="left:147px;width:54.3px">10.0.251.146</span><span class="c" style="left:324.2px;width:139.6px">Попытка открытия канала управления</span></div>
<div class="tr" style="top:564.86px"><span class="c c0" style="left:0;width:38px">17:16:11</span><span class="c" style="left:39px;width:107px">Контроллер турникета/замка</span><span class="c" style="left:147px;width:54.3px">10.0.251.146</span><span class="c" style="left:324.2px;width:139.6px">Ожидание открытия канала управления</span></div>
<div class="tr" style="top:574.02px"><span class="c c0" style="left:0;width:38px">17:16:11</span><span class="c" style="left:39px;width:107px">Контроллер турникета/замка</span><span class="c" style="left:147px;width:54.3px">10.0.251.146</span><span class="c" style="left:324.2px;width:139.6px">Канал регистрации <span class="u">ЗАКРЫТ</span></span></div>
<div class="vl" style="left:259.6px"></div>
<div class="vl" style="left:367.6px"></div>
<div class="vl" style="left:422.9px"></div>
<div class="vl" style="left:544.8px"></div>
<div class="vl" style="left:685.4px"></div>
<div class="vl" style="left:738.1px"></div>
<div class="vl" style="left:781.6px"></div>
<div class="vl" style="left:830.9px"></div>
<div class="vl" style="left:926.9px"></div>
<div id="status"></div><div id="botline"></div>
<div class="t" style="left:12.5px;top:2.76px;font-size:6.90px;line-height:8.28px;font-weight:400;color:#000;font-style:normal;font-family:'Liberation Sans',sans-serif;letter-spacing:-0.173px;">Консоль управления PERCo-S-20, Версия:</div>
<div class="t" style="left:145.5px;top:2.76px;font-size:6.90px;line-height:8.28px;font-weight:400;color:#6b7a90;font-style:normal;font-family:'Liberation Sans',sans-serif;letter-spacing:0.162px;">XX.XXXX</div>
<div class="t" style="left:1088.2px;top:-0.08px;font-size:6.80px;line-height:8.16px;font-weight:700;color:#fff;font-style:normal;font-family:'Liberation Sans',sans-serif;letter-spacing:0.288px;">✕</div>
<div class="t" style="left:4.6px;top:16.54px;font-size:7.60px;line-height:9.12px;font-weight:400;color:#000;font-style:normal;font-family:'Liberation Sans',sans-serif;letter-spacing:0.238px;"><u>Ф</u>айл</div>
<div class="t" style="left:31.6px;top:16.42px;font-size:7.80px;line-height:9.36px;font-weight:400;color:#000;font-style:normal;font-family:'Liberation Sans',sans-serif;letter-spacing:-0.056px;"><u>В</u>ид</div>
<div class="t" style="left:53.8px;top:16.42px;font-size:7.80px;line-height:9.36px;font-weight:400;color:#000;font-style:normal;font-family:'Liberation Sans',sans-serif;letter-spacing:-0.065px;"><u>Р</u>азделы</div>
<div class="t" style="left:93.0px;top:16.42px;font-size:7.80px;line-height:9.36px;font-weight:400;color:#000;font-style:normal;font-family:'Liberation Sans',sans-serif;letter-spacing:-0.065px;"><u>П</u>омощь</div>
<div class="t" style="left:14.5px;top:32.18px;font-size:8.20px;line-height:9.84px;font-weight:400;color:#000;font-style:normal;font-family:'Liberation Sans',sans-serif;letter-spacing:0.158px;">Закончить сеанс</div>
<div class="t" style="left:103.8px;top:32.18px;font-size:8.20px;line-height:9.84px;font-weight:400;color:#a9b2c2;font-style:normal;font-family:'Liberation Sans',sans-serif;letter-spacing:0.281px;">Сохранить</div>
<div class="t" style="left:172.0px;top:32.18px;font-size:8.20px;line-height:9.84px;font-weight:400;color:#000;font-style:normal;font-family:'Liberation Sans',sans-serif;letter-spacing:0.124px;">Обновить</div>
<div class="t" style="left:234.0px;top:32.18px;font-size:8.20px;line-height:9.84px;font-weight:400;color:#000;font-style:normal;font-family:'Liberation Sans',sans-serif;letter-spacing:0.551px;">Назад</div>
<div class="t" style="left:282.5px;top:32.18px;font-size:8.20px;line-height:9.84px;font-weight:400;color:#a9b2c2;font-style:normal;font-family:'Liberation Sans',sans-serif;letter-spacing:-0.579px;">Вперед</div>
<div class="t" style="left:344.8px;top:32.18px;font-size:8.20px;line-height:9.84px;font-weight:400;color:#000;font-style:normal;font-family:'Liberation Sans',sans-serif;letter-spacing:0.067px;">История</div>
<div class="t" style="left:409.0px;top:32.18px;font-size:8.20px;line-height:9.84px;font-weight:400;color:#000;font-style:normal;font-family:'Liberation Sans',sans-serif;letter-spacing:0.305px;">Справка</div>
<div class="t" style="left:466.3px;top:32.18px;font-size:8.20px;line-height:9.84px;font-weight:400;color:#000;font-style:normal;font-family:'Liberation Sans',sans-serif;letter-spacing:0.291px;">Выход</div>
<div class="t" style="left:27.4px;top:57.38px;font-size:7.70px;line-height:9.24px;font-weight:700;color:#fff;font-style:normal;font-family:'Liberation Sans',sans-serif;letter-spacing:-0.171px;">Администрирование</div>
<div class="t" style="left:27.4px;top:76.38px;font-size:7.70px;line-height:9.24px;font-weight:700;color:#fff;font-style:normal;font-family:'Liberation Sans',sans-serif;letter-spacing:-0.012px;">Управление и события</div>
<div class="t" style="left:27.4px;top:205.78px;font-size:7.70px;line-height:9.24px;font-weight:700;color:#fff;font-style:normal;font-family:'Liberation Sans',sans-serif;letter-spacing:0.081px;">Персонал</div>
<div class="t" style="left:27.4px;top:224.78px;font-size:7.70px;line-height:9.24px;font-weight:700;color:#fff;font-style:normal;font-family:'Liberation Sans',sans-serif;letter-spacing:0.048px;">Доступ</div>
<div class="t" style="left:27.4px;top:243.78px;font-size:7.70px;line-height:9.24px;font-weight:700;color:#fff;font-style:normal;font-family:'Liberation Sans',sans-serif;letter-spacing:0.130px;">Параметры доступа</div>
<div class="t" style="left:27.4px;top:262.78px;font-size:7.70px;line-height:9.24px;font-weight:700;color:#fff;font-style:normal;font-family:'Liberation Sans',sans-serif;letter-spacing:-0.131px;">Дисциплина</div>
<div class="t" style="left:27.4px;top:281.78px;font-size:7.70px;line-height:9.24px;font-weight:700;color:#fff;font-style:normal;font-family:'Liberation Sans',sans-serif;letter-spacing:-0.175px;">Верификация</div>
<div class="t" style="left:27.4px;top:300.78px;font-size:7.70px;line-height:9.24px;font-weight:700;color:#fff;font-style:normal;font-family:'Liberation Sans',sans-serif;letter-spacing:0.097px;">Пост наблюдения</div>
<div class="t" style="left:27.4px;top:319.78px;font-size:7.70px;line-height:9.24px;font-weight:700;color:#fff;font-style:normal;font-family:'Liberation Sans',sans-serif;letter-spacing:0.145px;">Заказ пропусков</div>
<div class="t" style="left:27.4px;top:338.78px;font-size:7.70px;line-height:9.24px;font-weight:700;color:#fff;font-style:normal;font-family:'Liberation Sans',sans-serif;letter-spacing:0.092px;">АТП</div>
<div class="t" style="left:27.4px;top:357.88px;font-size:7.70px;line-height:9.24px;font-weight:700;color:#fff;font-style:normal;font-family:'Liberation Sans',sans-serif;letter-spacing:-0.198px;">Кафе</div>
<div class="t" style="left:27.4px;top:376.88px;font-size:7.70px;line-height:9.24px;font-weight:700;color:#fff;font-style:normal;font-family:'Liberation Sans',sans-serif;letter-spacing:0.116px;">Учет рабочего времени</div>
<div class="t" style="left:27.4px;top:395.88px;font-size:7.70px;line-height:9.24px;font-weight:700;color:#fff;font-style:normal;font-family:'Liberation Sans',sans-serif;letter-spacing:0.033px;">Прием посетителей</div>
<div class="t" style="left:33.4px;top:116.75px;font-size:7.25px;line-height:8.70px;font-weight:400;color:#e3ebf7;font-style:normal;font-family:'Liberation Sans',sans-serif;letter-spacing:0.032px;">События устройств и действия пользователей</div>
<div class="t" style="left:41.8px;top:150.25px;font-size:7.25px;line-height:8.70px;font-weight:400;color:#e3ebf7;font-style:normal;font-family:'Liberation Sans',sans-serif;letter-spacing:-0.025px;text-decoration:underline;">Управление устройствами и мнемосхемой</div>
<div class="t" style="left:63.3px;top:183.55px;font-size:7.25px;line-height:8.70px;font-weight:400;color:#e3ebf7;font-style:normal;font-family:'Liberation Sans',sans-serif;letter-spacing:0.018px;">Выбор событий мониторинга</div>
<div class="t" style="left:222.8px;top:47.58px;font-size:6.70px;line-height:8.04px;font-weight:700;color:#fff;font-style:normal;font-family:'Liberation Sans',sans-serif;letter-spacing:0.018px;">Управление устройствами и мнемосхемой (Ознакомительный период: осталось 4 дн.)</div>
<div class="t" style="left:225.2px;top:62.18px;font-size:6.70px;line-height:8.04px;font-weight:400;color:#000;font-style:normal;font-family:'Liberation Sans',sans-serif;letter-spacing:-0.117px;">Устройства</div>
<div class="t" style="left:272.0px;top:62.24px;font-size:6.60px;line-height:7.92px;font-weight:400;color:#000;font-style:normal;font-family:'Liberation Sans',sans-serif;letter-spacing:-0.369px;">Помещения</div>
<div class="t" style="left:317.5px;top:62.30px;font-size:6.50px;line-height:7.80px;font-weight:400;color:#000;font-style:normal;font-family:'Liberation Sans',sans-serif;letter-spacing:-0.348px;">Мнемосхема</div>
<div class="t" style="left:397.6px;top:63.60px;font-size:6.50px;line-height:7.80px;font-weight:400;color:#000;font-style:normal;font-family:'Liberation Sans',sans-serif;letter-spacing:-0.208px;">100%</div>
<div class="t" style="left:445.0px;top:64.17px;font-size:6.55px;line-height:7.86px;font-weight:400;color:#000;font-style:normal;font-family:'Liberation Sans',sans-serif;letter-spacing:-0.094px;">Показывать журнал событий</div>
<div class="t" style="left:559.0px;top:64.17px;font-size:6.55px;line-height:7.86px;font-weight:400;color:#000;font-style:normal;font-family:'Liberation Sans',sans-serif;letter-spacing:-0.015px;">Автопоиск тревожного устройства</div>
<div class="t" style="left:227.0px;top:364.09px;font-size:6.35px;line-height:7.62px;font-weight:400;color:#000;font-style:normal;font-family:'Liberation Sans',sans-serif;letter-spacing:-0.004px;">ООО ПЕНИНХИММАШ</div>
<div class="t" style="left:224.1px;top:375.99px;font-size:6.35px;line-height:7.62px;font-weight:400;color:#000;font-style:normal;font-family:'Liberation Sans',sans-serif;letter-spacing:-0.181px;">Помещение:</div>
<div class="t" style="left:270.3px;top:375.99px;font-size:6.35px;line-height:7.62px;font-weight:400;color:#000;font-style:normal;font-family:'Liberation Sans',sans-serif;letter-spacing:0.029px;">Неконтролируемая территория</div>
<div class="t" style="left:557.5px;top:375.99px;font-size:6.35px;line-height:7.62px;font-weight:400;color:#000;font-style:normal;font-family:'Liberation Sans',sans-serif;letter-spacing:0.102px;">Устройство:</div>
<div class="t" style="left:1056.7px;top:375.99px;font-size:6.35px;line-height:7.62px;font-weight:400;color:#000;font-style:normal;font-family:'Liberation Sans',sans-serif;letter-spacing:-0.023px;">586 : 254</div>
<div class="t" style="left:1.0px;top:593.49px;font-size:6.35px;line-height:7.62px;font-weight:400;color:#000;font-style:normal;font-family:'Liberation Sans',sans-serif;letter-spacing:-0.030px;">Сервер:</div>
<div class="t" style="left:37.0px;top:593.49px;font-size:6.35px;line-height:7.62px;font-weight:400;color:#000;font-style:normal;font-family:'Liberation Sans',sans-serif;letter-spacing:0.431px;">User</div>
<div class="t" style="left:111.4px;top:593.49px;font-size:6.35px;line-height:7.62px;font-weight:400;color:#000;font-style:normal;font-family:'Liberation Sans',sans-serif;letter-spacing:0.036px;">Пользователь:</div>
<div class="t" style="left:175.4px;top:593.49px;font-size:6.35px;line-height:7.62px;font-weight:400;color:#000;font-style:normal;font-family:'Liberation Sans',sans-serif;letter-spacing:-0.140px;">ADMIN</div>
<div class="t" style="left:319.3px;top:593.49px;font-size:6.35px;line-height:7.62px;font-weight:400;color:#000;font-style:normal;font-family:'Liberation Sans',sans-serif;letter-spacing:0.110px;">Статус:</div>
<div class="t" style="left:353.8px;top:593.49px;font-size:6.35px;line-height:7.62px;font-weight:400;color:#000;font-style:normal;font-family:'Liberation Sans',sans-serif;letter-spacing:0.002px;">Запрос состояния устройств выполнен.</div>
</div></div></div>
</body></html>
